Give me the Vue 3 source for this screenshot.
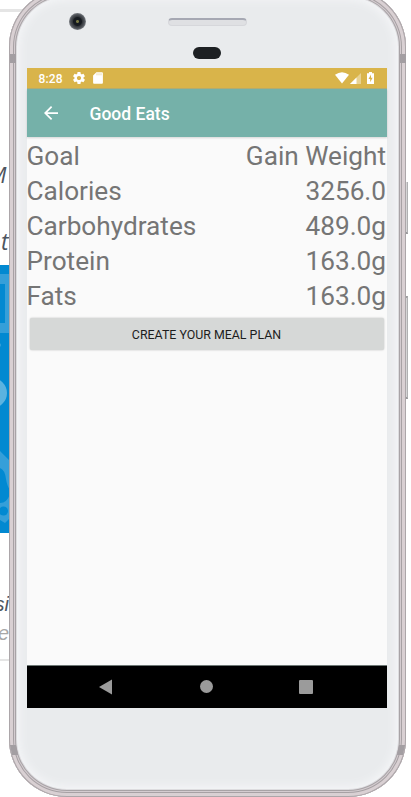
<template>
  <div class="page">
    <div class="backdrop">
      <div class="rule rule-top"></div>
      <span class="snippet snippet-m">M</span>
      <span class="snippet snippet-t">t</span>
      <svg class="banner" width="10" height="268" viewBox="0 0 10 268">
        <rect width="10" height="268" fill="#0289d1" />
        <path d="M0 9H10V68H0V58H5V19H0Z" fill="#359fd9" />
        <circle cx="-1" cy="80" r="2" fill="#359fd9" />
        <circle cx="-8" cy="128" r="15" fill="#5bb3e0" />
        <path d="M0 186L10 196V225Q7 221 6 214Q5 205 0 203Z" fill="#359fd9" />
        <path d="M0 238Q7 238 10 229V253L5 258L0 255Z" fill="#359fd9" />
        <circle cx="3.500" cy="246" r="4.500" fill="#0289d1" />
      </svg>
      <span class="snippet snippet-si">si</span>
      <span class="snippet snippet-e">e</span>
      <div class="rule rule-bottom"></div>
    </div>

    <div class="side-button power"></div>
    <div class="side-button volume"></div>

    <div class="phone">
      <i class="seam seam-tl"></i>
      <i class="seam seam-tr"></i>
      <i class="seam seam-bl"></i>
      <i class="seam seam-br"></i>
      <div class="camera"></div>
      <div class="speaker"></div>
      <div class="sensor"></div>

      <div class="screen">
        <div class="status-bar">
          <span class="time">8:28</span>
          <svg class="gear" width="12" height="12" viewBox="2 2 20 20">
            <path
              fill="#fff"
              d="M19.43 12.98c.04-.32.07-.64.07-.98s-.03-.66-.07-.98l2.11-1.65c.19-.15.24-.42.12-.64l-2-3.460c-.12-.22-.39-.3-.61-.22l-2.490 1c-.52-.4-1.080-.73-1.690-.98l-.38-2.650C14.460 2.180 14.250 2 14 2h-4c-.25 0-.46.18-.49.42l-.38 2.650c-.61.25-1.170.59-1.690.98l-2.490-1c-.23-.09-.49 0-.61.22l-2 3.460c-.13.22-.07.49.12.64l2.110 1.650c-.04.32-.07.65-.07.98s.03.66.07.98l-2.110 1.650c-.19.15-.24.42-.12.64l2 3.460c.12.22.39.3.61.22l2.490-1c.52.4 1.080.73 1.690.98l.38 2.650c.03.24.24.42.49.42h4c.25 0 .46-.18.49-.42l.38-2.650c.61-.25 1.170-.59 1.690-.98l2.490 1c.23.09.49 0 .61-.22l2-3.460c.12-.22.07-.49-.12-.64l-2.110-1.650zM12 15.500c-1.930 0-3.500-1.570-3.500-3.500s1.570-3.500 3.500-3.500 3.500 1.570 3.500 3.500-1.570 3.500-3.500 3.500z"
            />
          </svg>
          <svg class="sd" width="10" height="12" viewBox="0 0 10 12">
            <path fill="#fff" d="M3.400 0.300H9a.9.9 0 0 1 .9.900V10.800a.9.9 0 0 1-.9.900H1a.9.9 0 0 1-.9-.9V3.600Z" />
            <path stroke="#d9b44a" stroke-width=".8" opacity=".6" d="M4 1.300V3.300M6 1.300V3.300M8 1.300V3.300" />
          </svg>
          <div class="indicators">
            <svg width="14" height="12" viewBox="0 0 14 12">
              <path fill="#fff" d="M0 2.800Q7-2.200 14 2.800L7 11.500Z" />
            </svg>
            <svg class="signal" width="11" height="11" viewBox="0 0 11 11">
              <path fill="#fff" opacity=".4" d="M11 0V11H0Z" />
              <path fill="#fff" d="M6.500 4.500V11H0Z" />
            </svg>
            <svg class="battery" width="7" height="12" viewBox="0 0 7 12">
              <path fill="#fff" d="M2 0H5V1.200H7V12H0V1.200H2Z" />
              <path fill="#d9b44a" d="M4 2.500L1.500 7H3.200V10.300L5.600 5.800H4Z" />
            </svg>
          </div>
        </div>

        <div class="app-bar">
          <svg width="14" height="14" viewBox="4 4 16 16">
            <path fill="#fff" d="M20 11H7.830l5.590-5.590L12 4l-8 8 8 8 1.410-1.410L7.830 13H20v-2z" />
          </svg>
          <span class="title">Good Eats</span>
        </div>

        <div class="content">
          <div v-for="row in rows" :key="row.label" class="row">
            <span>{{ row.label }}</span>
            <span>{{ row.value }}</span>
          </div>
          <button class="plan-button">CREATE YOUR MEAL PLAN</button>
        </div>

        <div class="nav-bar">
          <svg width="13" height="16" viewBox="0 0 13 16">
            <path fill="#9b9b9b" d="M13 0.500V15.500L0 8Z" />
          </svg>
          <div class="home"></div>
          <div class="recent"></div>
        </div>
      </div>
    </div>
  </div>
</template>

<script setup>
const rows = [
  { label: 'Goal', value: 'Gain Weight' },
  { label: 'Calories', value: '3256.0' },
  { label: 'Carbohydrates', value: '489.0g' },
  { label: 'Protein', value: '163.0g' },
  { label: 'Fats', value: '163.0g' }
]
</script>

<style>
body {
  margin: 0;
  overflow: hidden;
}
</style>

<style scoped>
.page {
  position: relative;
  width: 411px;
  height: 797px;
  overflow: hidden;
  background: #fff;
  font-family: Roboto, sans-serif;
  display: flex;
}

.backdrop {
  position: absolute;
  left: 0;
  top: 0;
  width: 30px;
  height: 797px;
  overflow: hidden;
}

.rule {
  position: absolute;
  left: 0;
  width: 30px;
  height: 2px;
  background: #e5e5e5;
}

.rule-top {
  top: 9px;
  height: 3px;
}

.rule-bottom {
  top: 659px;
}

.snippet {
  position: absolute;
  font-family: "Open Sans", sans-serif;
  font-style: italic;
  font-size: 22px;
  line-height: 26px;
  color: #4d5560;
}

.snippet-m {
  left: -12px;
  top: 161px;
}

.snippet-t {
  left: 1px;
  top: 228px;
  font-size: 23px;
}

.banner {
  position: absolute;
  left: 0;
  top: 265px;
}

.snippet-si {
  right: 21px;
  top: 591px;
  font-family: "Liberation Sans", sans-serif;
  font-size: 20px;
}

.snippet-e {
  left: -2px;
  top: 620px;
  font-family: "Liberation Sans", sans-serif;
  font-size: 20px;
  color: #a8a8a8;
}

.side-button {
  position: absolute;
  left: 404px;
  width: 4px;
  box-sizing: border-box;
  background: #d5d5d6;
  border-right: 1px solid #b0b0b2;
  border-bottom: 2px solid #99999b;
}

.power {
  top: 182px;
  height: 52px;
}

.volume {
  top: 296px;
  height: 103px;
  border-top: 2px solid #a0a0a2;
}

.phone {
  position: relative;
  box-sizing: border-box;
  width: 397px;
  height: 808px;
  margin: -11px 0 0 9px;
  padding: 79px 0 0 18px;
  border-radius: 58px;
  background: #e9ebed;
  box-shadow:
    inset 0 0 0 1px #aca6a9,
    inset 0 0 0 4px #d9d0d3,
    inset 0 0 0 5px #a7a1a4,
    inset 0 0 0 6px #d4ccd0,
    inset 0 0 0 7px #a8a3a6,
    inset 0 0 0 8px #dddcdf,
    inset 0 0 9px 11px #f4f5f7;
}

.seam {
  position: absolute;
  width: 6px;
  height: 9px;
  background: #a39ea2;
}

.seam-tl {
  left: 1px;
  top: 65px;
}

.seam-tr {
  right: 0;
  top: 65px;
}

.seam-bl {
  left: 2px;
  top: 756px;
  height: 10px;
  transform: skewX(12deg);
}

.seam-br {
  right: 2px;
  top: 756px;
  height: 10px;
  transform: skewX(-12deg);
}

.camera {
  position: absolute;
  left: 60px;
  top: 24px;
  width: 17px;
  height: 17px;
  border-radius: 50%;
  background: radial-gradient(circle, #777745 0 1px, #161a20 2px 4px, #34373c 5px, #51555b 7px, #7d8085 8.500px);
}

.speaker {
  position: absolute;
  left: 159px;
  top: 29px;
  box-sizing: border-box;
  width: 79px;
  height: 8px;
  border-radius: 4px;
  border: 1px solid #d6d7db;
  border-top: 2px solid #a6a8b3;
  background: #dfe0e3;
}

.sensor {
  position: absolute;
  left: 184px;
  top: 58px;
  width: 28px;
  height: 12px;
  border-radius: 6px;
  background: #1d2023;
}

.screen {
  position: relative;
  display: flex;
  flex-direction: column;
  width: 360px;
  height: 640px;
  background: #fafafa;
}

.status-bar {
  display: flex;
  align-items: center;
  box-sizing: border-box;
  height: 21px;
  padding: 0 13px 0 11.500px;
  background: #d9b44a;
  border-bottom: 1px solid #b5ae71;
}

.time {
  width: 24px;
  margin-top: 1px;
  font-size: 12px;
  font-weight: 500;
  letter-spacing: 0.15px;
  color: #fff;
}

.gear {
  margin-left: 10.500px;
}

.sd {
  margin-left: 8px;
}

.indicators {
  display: flex;
  align-items: center;
  margin-left: auto;
}

.signal {
  margin: 1px 0 0 1px;
}

.battery {
  margin-left: 6px;
}

.app-bar {
  display: flex;
  align-items: center;
  height: 48px;
  padding-left: 17px;
  background: #75b1a9;
  box-shadow: 0 1px 2px rgba(0, 0, 0, 0.15);
}

.title {
  margin: 1px 0 0 31.500px;
  font-size: 17.500px;
  font-weight: 500;
  color: #fff;
}

.content {
  flex: 1;
  padding-top: 2px;
}

.row {
  display: flex;
  justify-content: space-between;
  height: 35px;
  margin: 0 1px 0 -0.500px;
  line-height: 35px;
  font-size: 26.200px;
  color: #757575;
}

.plan-button {
  display: block;
  width: 354px;
  height: 32px;
  margin: 4px 0 0 2.500px;
  padding: 0;
  border: 0;
  border-radius: 2px;
  background: #d6d8d7;
  box-shadow: 0 0 2px rgba(0, 0, 0, 0.25);
  font-family: inherit;
  font-size: 12.400px;
  font-weight: 400;
  color: #1d1d1d;
}

.nav-bar {
  display: flex;
  align-items: center;
  box-sizing: border-box;
  height: 43px;
  padding-left: 72px;
  background: #000;
  border-top: 1px solid #6d7774;
}

.nav-bar > * {
  margin-bottom: 1px;
}

.home {
  width: 13px;
  height: 13px;
  margin-left: 88px;
  border-radius: 50%;
  background: #9b9b9b;
}

.recent {
  width: 14px;
  height: 14px;
  margin-left: 86px;
  border-radius: 1px;
  background: #9b9b9b;
}
</style>
